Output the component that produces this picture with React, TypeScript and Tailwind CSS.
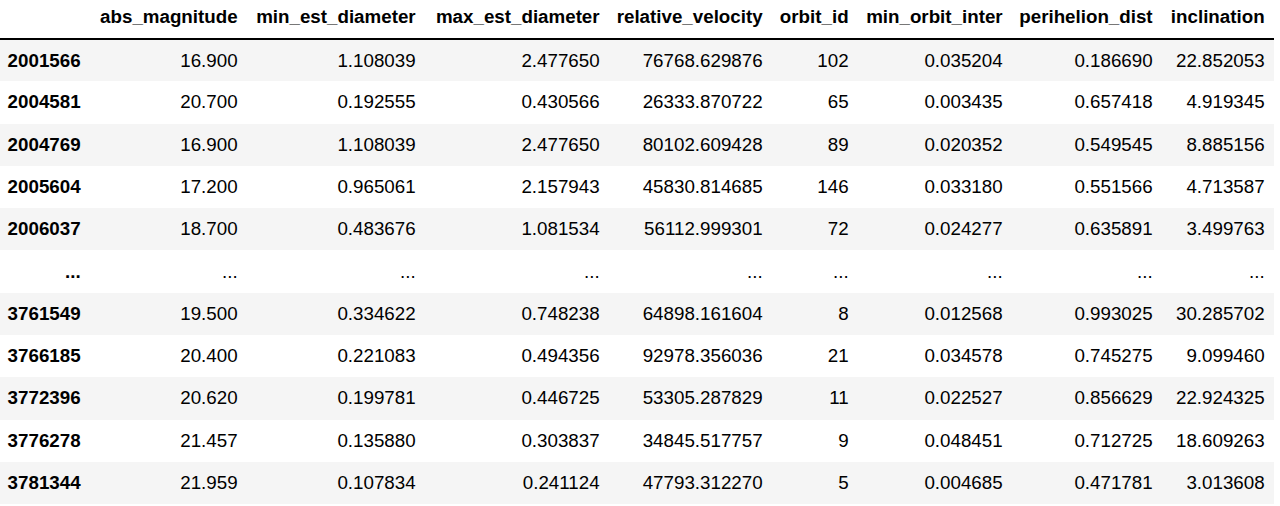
const columns: [string, string][] = [
  ["abs_magnitude", "w-[157px]"],
  ["min_est_diameter", "w-[178px]"],
  ["max_est_diameter", "w-[184px]"],
  ["relative_velocity", "w-[163px]"],
  ["orbit_id", "w-[86px]"],
  ["min_orbit_inter", "w-[154px]"],
  ["perihelion_dist", "w-[150px]"],
  ["inclination", "w-[112px]"],
];

const rows: [string, string[]][] = [
  ["2001566", ["16.900", "1.108039", "2.477650", "76768.629876", "102", "0.035204", "0.186690", "22.852053"]],
  ["2004581", ["20.700", "0.192555", "0.430566", "26333.870722", "65", "0.003435", "0.657418", "4.919345"]],
  ["2004769", ["16.900", "1.108039", "2.477650", "80102.609428", "89", "0.020352", "0.549545", "8.885156"]],
  ["2005604", ["17.200", "0.965061", "2.157943", "45830.814685", "146", "0.033180", "0.551566", "4.713587"]],
  ["2006037", ["18.700", "0.483676", "1.081534", "56112.999301", "72", "0.024277", "0.635891", "3.499763"]],
  ["...", ["...", "...", "...", "...", "...", "...", "...", "..."]],
  ["3761549", ["19.500", "0.334622", "0.748238", "64898.161604", "8", "0.012568", "0.993025", "30.285702"]],
  ["3766185", ["20.400", "0.221083", "0.494356", "92978.356036", "21", "0.034578", "0.745275", "9.099460"]],
  ["3772396", ["20.620", "0.199781", "0.446725", "53305.287829", "11", "0.022527", "0.856629", "22.924325"]],
  ["3776278", ["21.457", "0.135880", "0.303837", "34845.517757", "9", "0.048451", "0.712725", "18.609263"]],
  ["3781344", ["21.959", "0.107834", "0.241124", "47793.312270", "5", "0.004685", "0.471781", "3.013608"]],
];

export default function App() {
  return (
    <div className="min-h-screen bg-white text-black font-['Liberation_Sans',Arial,sans-serif] text-[18.75px]">
      <table className="table-fixed border-collapse w-[1274px]">
        <thead>
          <tr className="h-[39px] border-b-2 border-black">
            <th className="w-[90px] pr-[9.4px]"></th>
            {columns.map(([c, w]) => (
              <th key={c} className={`${w} pr-[9.4px] pb-[7px] align-bottom text-right font-bold whitespace-nowrap`}>
                {c}
              </th>
            ))}
          </tr>
        </thead>
        <tbody>
          {rows.map(([idx, vals], i) => (
            <tr key={i} className={i % 2 === 0 ? "h-[42.3px] bg-[#f5f5f5]" : "h-[42.3px] bg-white"}>
              <th className="pr-[9.4px] text-right font-bold whitespace-nowrap">{idx}</th>
              {vals.map((v, j) => (
                <td key={j} className="pr-[9.4px] text-right whitespace-nowrap">
                  {v}
                </td>
              ))}
            </tr>
          ))}
        </tbody>
      </table>
    </div>
  );
}
